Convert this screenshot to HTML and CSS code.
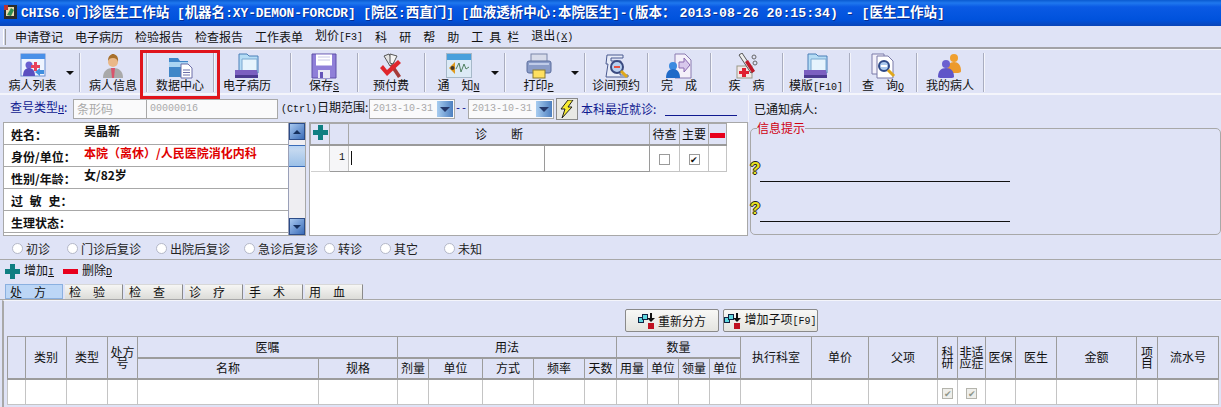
FILE: index.html
```html
<!DOCTYPE html>
<html lang="zh">
<head>
<meta charset="utf-8">
<title>CHIS6.0门诊医生工作站</title>
<link rel="stylesheet" href="styles.css">
</head>
<body>
<div class="window">
  <header class="title">
    <svg class="app-icon" width="15" height="16" viewBox="0 0 15 16"><rect x="1" y="1" width="13" height="14" fill="#2c2c2c"/><rect x="3" y="3" width="8" height="9" fill="#e8dcb0"/><path d="M4 11l4-7 3 2-3 6z" fill="#2f8f4f"/><path d="M1 1h4v5H1z" fill="#b33"/></svg>
    <span class="title-text">CHIS6.0<b class="cj">门诊医生工作站</b> [<b class="cj">机器名</b>:XY-DEMON-FORCDR] [<b class="cj">院区</b>:<b class="cj">西直门</b>] [<b class="cj">血液透析中心</b>:<b class="cj">本院医生</b>]-(<b class="cj">版本：</b><b class="dt">2013-08-26 20:15:34) - [</b><b class="cj">医生工作站</b>]</span>
  </header>

  <nav class="menu">
    <i class="handle"></i>
    <span>申请登记</span><span>电子病历</span><span>检验报告</span><span>检查报告</span><span>工作表单</span><span>划价<b class="lat">[F3]</b></span><span>科</span><span>研</span><span>帮</span><span>助</span><span class="wide">工具栏</span><span>退出<b class="lat">(<u>X</u>)</b></span>
  </nav>

  <div class="toolbar">
    <div class="tool t-first">
      <svg width="26" height="26" viewBox="0 0 26 26"><rect x="1" y="1" width="24" height="22" fill="#eef4ff" stroke="#6a8fd0"/><rect x="1" y="1" width="24" height="5" fill="#4a90e8"/><circle cx="9" cy="12" r="3.5" fill="#6a5fd0"/><path d="M3 23c0-6 3-8 6-8s6 2 6 8z" fill="#5a4fc0"/><path d="M14 9h3v3h3v3h-3v3h-3v-3h-3v-3h3z" fill="#e8405a"/><path d="M15 19l5-4v2h4v4h-4v2z" fill="#3f8fe0"/></svg>
      <span class="tl">病人列表</span><em class="arrow"></em>
    </div>
    <div class="tool">
      <svg width="26" height="26" viewBox="0 0 26 26"><path d="M3 25c0-7 4-10 10-10s10 3 10 10z" fill="#a9a9a9"/><path d="M11 15h4l-1 10h-2z" fill="#d8546c"/><circle cx="13" cy="9" r="5" fill="#eab888"/><path d="M8 8c0-5 3-7 5-7s6 2 5 8c-1-3-2-4-5-4s-4 1-5 3z" fill="#a8702c"/></svg>
      <span class="tl">病人信息</span>
    </div>
    <div class="tool">
      <svg width="26" height="26" viewBox="0 0 26 26"><path d="M2 5h9l2 3h8v16H2z" fill="#3f86c8"/><path d="M2 9h19v5H2z" fill="#a9d4f2"/><path d="M14 11h7l4 4v10H14z" fill="#fff" stroke="#6d6fa8"/><path d="M16 17h7M16 19.500h7M16 22h7" stroke="#6d6fa8"/></svg>
      <span class="tl">数据中心</span>
    </div>
    <div class="tool t-folder">
      <svg width="26" height="26" viewBox="0 0 26 26"><path d="M5 1h8l2 2h9v17H5z" fill="#b5dcf5" stroke="#4a7fb8"/><path d="M8 6h15v13H8z" fill="#e6f4fd" stroke="#7ba8d0"/><path d="M1 17h22l1 5H1z" fill="#7b5fc0"/><path d="M1 22h23v3H1z" fill="#4b3a90"/></svg>
      <span class="tl">电子病历</span>
    </div>
    <div class="tool">
      <svg width="26" height="26" viewBox="0 0 26 26"><path d="M1 1h24v24H1z" fill="#8f7fd8" stroke="#5f50a8"/><rect x="5" y="1.500" width="16" height="11" fill="#fff"/><path d="M7 4h12M7 7h12" stroke="#c8c8e8"/><rect x="7" y="17" width="12" height="8" fill="#e8e8f4"/><rect x="9" y="19" width="3" height="6" fill="#6656b8"/></svg>
      <span class="tl">保存<u class="lat">S</u></span>
    </div>
    <div class="tool">
      <svg width="26" height="26" viewBox="0 0 26 26"><path d="M6 3l5-2 5 9-4 3z" fill="#e4e4e4" stroke="#555"/><path d="M12 1l7 2-4 8-3-1z" fill="#f4f4f4" stroke="#555"/><path d="M15 11l8 12-3 2-8-12z" fill="#a53a3a"/><path d="M2 15l3-3 4 5L20 7l3 3L9 23z" fill="#e0262c"/></svg>
      <span class="tl">预付费</span>
    </div>
    <div class="tool t-drop">
      <svg width="26" height="26" viewBox="0 0 26 26"><rect x="0.500" y="0.500" width="25" height="24" fill="#dceaf6" stroke="#a6b8c8"/><rect x="1" y="1" width="24" height="6" fill="#49a0dc"/><path d="M3 15l6-6v12z" fill="#e09a1c"/><circle cx="6.500" cy="15" r="2" fill="#44382c"/><path d="M10 16l3-6 2 9 3-8 2 5 3-2" fill="none" stroke="#508060"/></svg>
      <span class="tl">通　知<u class="lat">N</u></span><em class="arrow"></em>
    </div>
    <div class="tool t-drop">
      <svg width="26" height="26" viewBox="0 0 26 26"><rect x="5" y="1" width="16" height="8" fill="#d8dcea" stroke="#7a86a8"/><rect x="1" y="8" width="24" height="12" rx="2" fill="#8a9cc8" stroke="#5a6c9c"/><rect x="3" y="10" width="20" height="2" fill="#c0cce8"/><rect x="7" y="17" width="12" height="8" fill="#ffe060" stroke="#8a7a30"/></svg>
      <span class="tl">打印<u class="lat">P</u></span><em class="arrow"></em>
    </div>
    <div class="tool t-a">
      <svg width="26" height="26" viewBox="0 0 26 26"><path d="M4 2h16v3H8v3h10l-1 14h8v2H3l2-13H3z" fill="#e8ecf8" stroke="#4a5a90"/><circle cx="14" cy="14" r="6" fill="#b8d0f0" stroke="#3a4a80" stroke-width="2"/><path d="M11 14h6" stroke="#e85040" stroke-width="2"/><path d="M18 18l6 6" stroke="#e0a81c" stroke-width="3"/></svg>
      <span class="tl">诊间预约</span>
    </div>
    <div class="tool t-b">
      <svg width="26" height="26" viewBox="0 0 26 26"><path d="M9 1h10l6 6v18H9z" fill="#f4f0fa" stroke="#8a7ab0"/><path d="M13 9h5V5l6 7-6 7v-4h-5z" fill="#d8c8ec" stroke="#8a6ab0"/><circle cx="7" cy="13" r="4" fill="#3a8ae0"/><path d="M0 25c0-6 3-9 7-9s7 3 7 9z" fill="#1f6ac8"/></svg>
      <span class="tl">完　成</span>
    </div>
    <div class="tool t-c">
      <svg width="26" height="26" viewBox="0 0 26 26"><rect x="3" y="13" width="15" height="12" fill="#f2e6e6" stroke="#998"/><path d="M8 15h4v3h3v3h-3v3H8v-3H5v-3h3z" fill="#e02030"/><path d="M5 2l3-2 12 18-3 2z" fill="#eee" stroke="#555"/><path d="M11 9l3-2 7 11-3 2z" fill="#c01828"/><circle cx="20" cy="4" r="2" fill="none" stroke="#666"/><circle cx="21" cy="10" r="2" fill="none" stroke="#666"/></svg>
      <span class="tl">疾　病</span>
    </div>
    <div class="tool">
      <svg width="26" height="26" viewBox="0 0 26 26"><path d="M5 1h8l2 2h9v17H5z" fill="#b5dcf5" stroke="#4a7fb8"/><path d="M8 6h15v13H8z" fill="#e6f4fd" stroke="#7ba8d0"/><path d="M1 17h22l1 5H1z" fill="#7b5fc0"/><path d="M1 22h23v3H1z" fill="#4b3a90"/></svg>
      <span class="tl">模版<b class="lat">[F10]</b></span>
    </div>
    <div class="tool">
      <svg width="26" height="26" viewBox="0 0 26 26"><path d="M2 1h12v20H2z" fill="#f2f0fa" stroke="#7a7aa8"/><path d="M7 3h11l5 5v17H7z" fill="#fff" stroke="#7a7aa8"/><circle cx="14" cy="13" r="5" fill="#a9c8ec" stroke="#2f4a88" stroke-width="2"/><path d="M11 13h6" stroke="#fff" stroke-width="2"/><path d="M18 17l6 6" stroke="#e0a81c" stroke-width="3"/></svg>
      <span class="tl">查　询<u class="lat">Q</u></span>
    </div>
    <div class="tool">
      <svg width="26" height="26" viewBox="0 0 26 26"><circle cx="17" cy="5" r="4" fill="#f0a030"/><path d="M10 18c0-6 3-9 7-9s7 3 7 9c0 2-3 2-7 2s-7 0-7-2z" fill="#ec9a2c"/><circle cx="9" cy="11" r="4" fill="#6a60d0"/><path d="M1 24c0-6 3-9 8-9s8 3 8 9c0 1-3 1-8 1s-8 0-8-1z" fill="#5f55c8"/></svg>
      <span class="tl">我的病人</span>
    </div>
  </div>

  <div class="query">
    <a class="blue q-type">查号类型<u class="lat">H</u><span>:</span></a>
    <div class="field f-barcode">条形码</div>
    <div class="field f-no lat">00000016</div>
    <span class="q-range"><b class="lat">(Ctrl)</b>日期范围<span>:</span></span>
    <div class="field f-date"><span class="lat">2013-10-31</span><i class="combo"></i></div>
    <span class="dash lat">--</span>
    <div class="field f-date"><span class="lat">2013-10-31</span><i class="combo"></i></div>
    <button class="bolt" type="button"><svg width="14" height="18" viewBox="0 0 14 18"><path d="M8 0h5L8 7h4L2 18l3-9H1z" fill="#f8ec30" stroke="#222"/></svg></button>
    <span class="blue q-recent">本科最近就诊<span>:</span></span>
    <span class="recent-line"></span>
    <span class="q-notified">已通知病人<span>:</span></span>
  </div>

  <section class="panels">
    <div class="info">
      <div class="info-rows">
        <div class="info-row"><b class="key">姓名：</b><b class="val">吴晶新</b></div>
        <div class="info-row"><b class="key">身份/单位：</b><b class="val red">本院（离休）/人民医院消化内科</b></div>
        <div class="info-row"><b class="key">性别/年龄：</b><b class="val">女/82岁</b></div>
        <div class="info-row"><b class="key spaced">过 敏 史：</b></div>
        <div class="info-row"><b class="key">生理状态：</b></div>
      </div>
      <div class="scroll">
        <i class="sb-btn"><em class="up"></em></i>
        <i class="sb-thumb"></i>
        <i class="sb-fill"></i>
        <i class="sb-btn"><em class="down"></em></i>
      </div>
    </div>

    <div class="diag">
      <table class="diag-table">
        <colgroup><col class="d1"><col class="d2"><col class="d3"><col class="d4"><col class="d5"><col class="d6"><col class="d7"></colgroup>
        <tr class="diag-head">
          <th class="plus-cell"><i class="plus"></i></th>
          <th></th>
          <th colspan="2">诊　　断</th>
          <th>待查</th>
          <th>主要</th>
          <th class="minus-cell"><i class="minus"></i></th>
        </tr>
        <tr class="diag-row">
          <td class="blank"></td>
          <td class="num lat">1</td>
          <td class="edit"><i class="caret"></i></td>
          <td class="edit"></td>
          <td class="chk"><i class="box"></i></td>
          <td class="chk"><i class="box on">✔</i></td>
          <td class="chk"></td>
        </tr>
      </table>
    </div>

    <fieldset class="notice">
      <legend>信息提示</legend>
      <div class="notice-row"><span class="q">?</span><i class="rule"></i></div>
      <div class="notice-row"><span class="q">?</span><i class="rule"></i></div>
    </fieldset>
  </section>

  <div class="radios">
    <label class="r r1"><i></i>初诊</label>
    <label class="r r2"><i></i>门诊后复诊</label>
    <label class="r r3"><i></i>出院后复诊</label>
    <label class="r r4"><i></i>急诊后复诊</label>
    <label class="r r5"><i></i>转诊</label>
    <label class="r r6"><i></i>其它</label>
    <label class="r"><i></i>未知</label>
  </div>

  <div class="adds">
    <i class="plus"></i><span class="add-l">增加<u class="lat">I</u></span>
    <i class="minus"></i><span>删除<u class="lat">D</u></span>
  </div>

  <div class="tabs">
    <span class="tab active">处　方</span><span class="tab">检　验</span><span class="tab">检　查</span><span class="tab">诊　疗</span><span class="tab">手　术</span><span class="tab">用　血</span>
  </div>

  <section class="rx">
    <div class="rx-actions">
      <button class="act" type="button"><svg width="18" height="16" viewBox="0 0 18 16"><rect x="0.500" y="4.500" width="5" height="5" fill="#60d8e0" stroke="#124"/><rect x="4.500" y="1.500" width="5" height="5" fill="#60d8e0" stroke="#124"/><path d="M12 0v5h3l-4 4-4-4h3V0z" fill="#111" transform="translate(2)"/><rect x="10" y="10" width="6" height="6" fill="#c01020"/></svg>重新分方</button>
      <button class="act" type="button"><svg width="18" height="16" viewBox="0 0 18 16"><rect x="0.500" y="4.500" width="5" height="5" fill="#60d8e0" stroke="#124"/><rect x="4.500" y="1.500" width="5" height="5" fill="#60d8e0" stroke="#124"/><path d="M12 0v5h3l-4 4-4-4h3V0z" fill="#111" transform="translate(2)"/><rect x="10" y="10" width="6" height="6" fill="#c01020"/></svg><span class="act-l">增加子项<b class="lat">[F9]</b></span></button>
    </div>
    <table class="grid">
      <colgroup>
        <col class="g1"><col class="g2"><col class="g2"><col class="g3"><col class="g4"><col class="g5"><col class="g6"><col class="g7"><col class="g8"><col class="g8"><col class="g9"><col class="g6"><col class="g6"><col class="g6"><col class="g6"><col class="g10"><col class="g11"><col class="g12"><col class="g13"><col class="g14"><col class="g15"><col class="g2"><col class="g16"><col class="g17"><col class="g18">
      </colgroup>
      <tr class="gh">
        <th rowspan="2"></th><th rowspan="2">类别</th><th rowspan="2">类型</th><th rowspan="2" class="tight">处方号</th>
        <th colspan="2">医嘱</th><th colspan="5">用法</th><th colspan="4">数量</th>
        <th rowspan="2">执行科室</th><th rowspan="2">单价</th><th rowspan="2">父项</th>
        <th rowspan="2" class="tight">科研</th><th rowspan="2" class="tight">非适应症</th><th rowspan="2">医保</th><th rowspan="2">医生</th><th rowspan="2">金额</th><th rowspan="2" class="tight">项目</th><th rowspan="2">流水号</th>
      </tr>
      <tr class="gh">
        <th>名称</th><th>规格</th><th>剂量</th><th>单位</th><th>方式</th><th>频率</th><th>天数</th><th>用量</th><th>单位</th><th>领量</th><th>单位</th>
      </tr>
      <tr class="gr">
        <td></td><td></td><td></td><td></td><td></td><td></td><td></td><td></td><td></td><td></td><td></td><td></td><td></td><td></td><td></td><td></td><td></td><td></td>
        <td><i class="dis">✔</i></td><td><i class="dis">✔</i></td><td></td><td></td><td></td><td></td><td></td>
      </tr>
    </table>
  </section>

  <div class="annot"></div>
</div>
</body>
</html>
```
FILE: styles.css
```css
* { box-sizing: border-box; }
html, body { margin: 0; padding: 0; }
body {
  font-family: "Noto Sans CJK SC", "Liberation Sans", sans-serif;
  font-size: 12px;
  line-height: 14px;
  color: #111;
  background: #dfe3f6;
}
i, em, u, b { font-style: normal; }
b { font-weight: normal; }
.lat { font-family: "Liberation Mono", monospace; font-size: 10px; }

.window {
  position: relative;
  width: 1221px;
  height: 407px;
  overflow: hidden;
  background: #dfe3f6;
}

/* Title bar */
.title {
  height: 26px;
  display: flex;
  align-items: center;
  gap: 3px;
  padding: 0 0 2px 3px;
  background: linear-gradient(#0a5ad0 0, #1f78ee 3px, #0a5ae4 7px, #0052dc 20px, #0a45b8 26px);
  color: #fff;
}
.app-icon { flex: none; }
.title-text {
  font-family: "Liberation Mono", monospace;
  font-size: 12.800px;
  font-weight: bold;
  white-space: pre;
  text-shadow: 1px 1px 0 #0a2f90;
}
.cj {
  font-family: "Noto Sans CJK SC", sans-serif;
  font-size: 13.500px;
  font-weight: bold;
}
.dt {
  font-size: 13.200px;
  font-weight: bold;
  margin-left: 4px;
}

/* Menu */
.menu {
  height: 21px;
  display: flex;
  align-items: center;
  gap: 12px;
  padding-left: 3px;
  white-space: nowrap;
}
.handle {
  width: 3px;
  height: 16px;
  margin-right: -3px;
  border-left: 1px solid #fff;
  border-right: 1px solid #9a9a9a;
  background: #cfd3e6;
}
.wide { letter-spacing: 6px; margin-right: -6px; }

/* Toolbar */
.toolbar {
  height: 48px;
  display: flex;
  align-items: flex-start;
  padding: 4px 0 0 3px;
  border-top: 2px solid #a2a2a6;
  border-bottom: 2px solid #f4f5fb;
  box-shadow: inset 0 1px 0 #f4f5fb;
}
.tool {
  position: relative;
  width: 67px;
  height: 39px;
  display: flex;
  flex-direction: column;
  align-items: center;
  justify-content: space-between;
  border-right: 1px solid #a9adc0;
  box-shadow: 1px 0 0 #f4f5fb;
  white-space: nowrap;
}
.tool svg { margin-bottom: -1px; }
.tl { display: block; height: 14px; }
.t-first { width: 77px; padding-right: 17px; }
.t-folder { width: 77px; padding-right: 10px; }
.t-drop { width: 80px; padding-right: 12px; }
.t-a { width: 63px; }
.t-b { width: 63px; }
.t-c { width: 72px; }
.arrow {
  position: absolute;
  right: 5px;
  top: 18px;
  width: 0;
  height: 0;
  border: 4px solid transparent;
  border-top: 4px solid #111;
  border-bottom: 0;
}

/* Query row */
.query {
  height: 27px;
  display: flex;
  align-items: center;
  padding-left: 10px;
  white-space: nowrap;
}
.blue { color: #101a90; }
.q-type { width: 63px; }
.field {
  height: 20px;
  display: flex;
  align-items: center;
  padding-left: 3px;
  background: #fafafb;
  border: 1px solid #a8a8a8;
  color: #a9a9a9;
}
.f-barcode { width: 74px; }
.f-no { width: 131px; margin-left: 0; border-left: 0; }
.q-range { margin-left: 3px; width: 88px; }
.f-date {
  width: 86px;
  justify-content: space-between;
  padding-right: 1px;
}
.combo {
  position: relative;
  width: 16px;
  height: 16px;
  background: linear-gradient(90deg, #a8cdf0, #4d7fc0);
}
.combo::after {
  content: "";
  position: absolute;
  left: 3px;
  top: 6px;
  border: 5px solid transparent;
  border-top: 5px solid #25386a;
  border-bottom: 0;
}
.dash { width: 13px; color: #101a90; font-size: 10px; }
.bolt {
  width: 22px;
  height: 22px;
  margin-left: 2px;
  padding: 0;
  display: flex;
  align-items: center;
  justify-content: center;
  background: #e8e8e4;
  border: 1px solid #8a8a8a;
}
.q-recent { margin-left: 3px; width: 84px; }
.recent-line {
  width: 72px;
  height: 14px;
  border-bottom: 1px solid #101a90;
}
.q-notified {
  margin-left: 11px;
  padding-left: 5px;
  height: 27px;
  line-height: 27px;
  border-left: 1px solid #f4f5fb;
}

/* Panels */
.panels {
  height: 114px;
  display: flex;
  padding-left: 3px;
}
.info {
  width: 303px;
  height: 114px;
  display: flex;
  background: #fff;
  border: 1px solid #a8a8a8;
}
.info-rows { width: 284px; }
.info-row {
  position: relative;
  height: 22px;
  padding: 3px 0 0 7px;
  display: flex;
  border-bottom: 1px solid #a8a8a8;
  font-weight: bold;
}
.key { width: 73px; font-weight: bold; padding-top: 2px; }
.spaced { word-spacing: 4px; white-space: nowrap; }
.val { font-weight: bold; margin-top: -2px; }
.red { color: #e00000; }
.scroll {
  width: 17px;
  margin-top: 0;
  display: flex;
  flex-direction: column;
  background: #efeef2;
  border-left: 1px solid #9aa0b8;
}
.sb-btn {
  position: relative;
  height: 17px;
  flex: none;
  background: linear-gradient(135deg, #a8c8f0, #3a6cb8);
  border: 1px solid #2c4c88;
}
.sb-thumb {
  height: 22px;
  flex: none;
  background: linear-gradient(#b8d4f4, #c4d8f0 20%, #9cc0e8);
  border-top: 1px solid #3a6cb8;
  border-bottom: 1px solid #3a6cb8;
  margin-top: 5px;
}
.sb-fill { flex: 1; }
.up, .down {
  position: absolute;
  left: 3px;
  top: 6px;
  border: 4px solid transparent;
}
.up { border-bottom: 4px solid #16305e; border-top: 0; }
.down { border-top: 4px solid #16305e; border-bottom: 0; }

.diag {
  width: 439px;
  height: 114px;
  margin-left: 3px;
  background: #fff;
  border: 1px solid #a8a8a8;
}
.diag-table {
  border-collapse: collapse;
  table-layout: fixed;
  width: 416px;
}
.d1 { width: 19px; }
.d2 { width: 19px; }
.d3 { width: 196px; }
.d4 { width: 105px; }
.d5 { width: 30px; }
.d6 { width: 29px; }
.d7 { width: 18px; }
.diag-head th {
  height: 21px;
  padding: 0;
  font-weight: normal;
  background: #dfe3f6;
  border: 1px solid #a8a8a8;
  border-bottom: 2px solid #9a9a9a;
}
.plus-cell, .minus-cell { padding: 0; }
.plus {
  display: inline-block;
  position: relative;
  width: 15px;
  height: 15px;
  background:
    linear-gradient(#0f7f82, #0f7f82) center / 15px 5px no-repeat,
    linear-gradient(#0f7f82, #0f7f82) center / 5px 15px no-repeat;
}
.minus {
  display: inline-block;
  width: 15px;
  height: 5px;
  vertical-align: middle;
  background: #e8001c;
}
.diag-row td { height: 27px; padding: 0; }
.blank { border-bottom: 1px solid #cfcfcf; background: #fff; }
.num {
  text-align: right;
  padding-right: 3px !important;
  background: #f6f6f8;
  border: 1px solid #c4c4c4;
  border-bottom: 1px solid #9a9a9a;
}
.edit { border: 1px solid #9a9a9a; border-top: 0; }
.caret {
  display: block;
  width: 1px;
  height: 14px;
  margin-left: 2px;
  background: #111;
}
.chk { text-align: center; border: 1px solid #c4c4c4; border-top: 0; }
.box {
  display: inline-block;
  width: 11px;
  height: 11px;
  font-size: 9px;
  line-height: 10px;
  color: #111;
  vertical-align: middle;
  background: #fff;
  border: 1px solid #9a9a9a;
}

.notice {
  width: 471px;
  height: 113px;
  margin: 0 0 0 2px;
  padding: 0;
  min-width: 0;
  border: 1px solid #a8a8a8;
  border-radius: 5px;
}
.notice legend {
  padding: 0;
  margin-left: 6px;
  color: #d00010;
  line-height: 12px;
}
.notice-row {
  display: flex;
  align-items: flex-end;
  height: 40px;
}
.notice-row:first-of-type { margin-top: 8px; }
.q {
  width: 10px;
  font: bold 17px/16px "Liberation Sans", sans-serif;
  color: #e8e020;
  text-shadow: 1px 0 0 #222, -1px 0 0 #222, 0 1px 0 #222, 0 -1px 0 #222;
  margin: 0 0 5px -1px;
}
.rule {
  width: 250px;
  height: 1px;
  margin-left: 0;
  background: #111;
}

/* Radios */
.radios {
  height: 24px;
  display: flex;
  align-items: center;
  padding: 2px 0 0 12px;
  color: #222;
  border-bottom: 1px solid #a8a8a8;
  white-space: nowrap;
}
.r { display: flex; align-items: center; gap: 3px; }
.r i {
  width: 11px;
  height: 11px;
  border-radius: 50%;
  background: #fff;
  border: 1px solid #b4b8c8;
}
.r1 { width: 55px; }
.r2 { width: 89px; }
.r3 { width: 88px; }
.r4 { width: 80px; }
.r5 { width: 56px; }
.r6 { width: 64px; }

/* Add/delete */
.adds {
  height: 24px;
  display: flex;
  align-items: center;
  gap: 4px;
  padding: 0 0 2px 5px;
}
.add-l { width: 35px; }

/* Tabs */
.tabs {
  height: 16px;
  display: flex;
  gap: 2px;
  padding-left: 5px;
  border-bottom: 1px solid #a8a8a8;
}
.tab {
  width: 58px;
  height: 15px;
  padding-left: 4px;
  line-height: 14px;
  background: linear-gradient(#f6f6f4, #dcdcd8);
  border-right: 1px solid #8a8a8a;
  border-top: 1px solid #d8d8d8;
}
.active {
  background: #bcd6f6;
  border: 1px solid #8ab0e0;
}

/* Prescription grid */
.rx {
  height: 107px;
  padding: 8px 0 0 3px;
  border-left: 2px solid #a8a8a8;
  margin-left: 2px;
  background: #dfe3f6;
  border-top: 1px solid #f4f5fb;
}
.rx-actions {
  height: 27px;
  display: flex;
  justify-content: flex-start;
  gap: 4px;
  padding-left: 618px;
}
.act {
  width: 94px;
  height: 23px;
  padding: 0;
  display: flex;
  align-items: center;
  justify-content: center;
  gap: 2px;
  font: inherit;
  color: #111;
  white-space: nowrap;
  background: linear-gradient(#f8f8f6, #e4e4e0);
  border: 1px solid #8a8a8a;
  border-radius: 2px;
}
.act + .act { width: 95px; }
.act-l { display: block; }
.grid {
  border-collapse: collapse;
  table-layout: fixed;
  width: 1211px;
}
.grid th {
  height: 21px;
  padding: 0;
  font-weight: normal;
  background: #dfe3f6;
  border: 1px solid #9c9c9c;
  border-bottom: 2px solid #9c9c9c;
}
.tight { line-height: 11px; }
.grid td {
  height: 26px;
  padding: 0;
  text-align: center;
  background: #fff;
  border: 1px solid #c4c4c4;
}
.dis {
  display: inline-block;
  width: 11px;
  height: 11px;
  font-size: 9px;
  line-height: 10px;
  color: #8f968a;
  background: #eeeeea;
  border: 1px solid #b4b4ac;
}
.g1 { width: 18px; }
.g2 { width: 41px; }
.g3 { width: 30px; }
.g4 { width: 181px; }
.g5 { width: 79px; }
.g6 { width: 31px; }
.g7 { width: 54px; }
.g8 { width: 51px; }
.g9 { width: 32px; }
.g10 { width: 71px; }
.g11 { width: 57px; }
.g12 { width: 69px; }
.g13 { width: 20px; }
.g14 { width: 28px; }
.g15 { width: 30px; }
.g16 { width: 80px; }
.g17 { width: 21px; }
.g18 { width: 61px; }

/* Red annotation drawn over the toolbar */
.annot {
  position: absolute;
  left: 140px;
  top: 50px;
  width: 80px;
  height: 49px;
  border: 3px solid #e0141c;
}
```
